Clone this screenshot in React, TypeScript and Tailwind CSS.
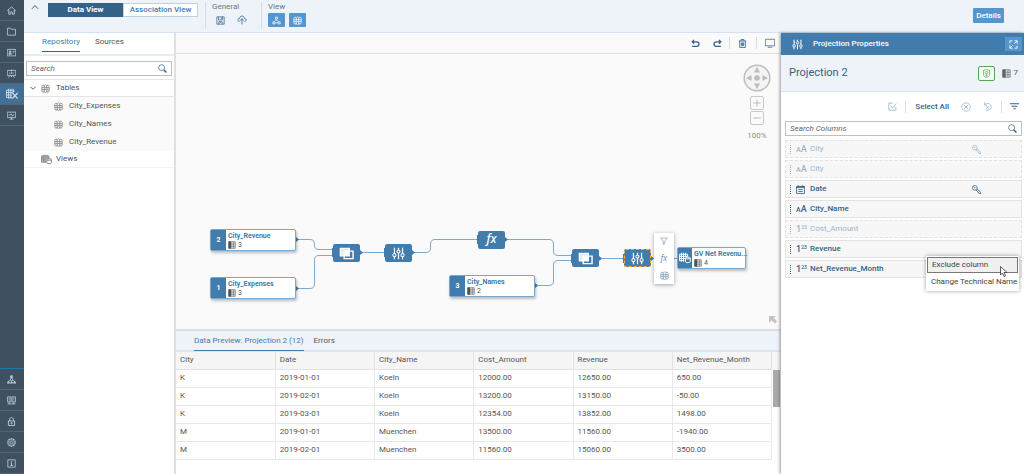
import { ReactNode, useState } from "react";

const FONT = "font-['Roboto','Noto_Sans',sans-serif]";

function Icon({ size = 12, className = "", children }: { size?: number; className?: string; children: ReactNode }) {
  return (
    <svg
      width={size}
      height={size}
      viewBox="0 0 16 16"
      fill="none"
      stroke="currentColor"
      strokeWidth={1.3}
      className={`shrink-0 ${className}`}
      aria-hidden="true"
    >
      {children}
    </svg>
  );
}

const paths = {
  home: <path d="M0.500 8.500L8 1.500l7.500 7M3 7v7.500h3.500v-4h3v4H13V7" strokeWidth="1.600" />,
  folder: <path d="M1 2h5l1.500 2H15v10.500H1z" strokeWidth="1.500" />,
  card: (
    <>
      <path d="M0.500 2.500h15v11.500H.500zM10 6h3.500M10 8.500h2" strokeWidth="1.500" />
      <circle cx="5.500" cy="6.500" r="1.500" fill="currentColor" />
      <path d="M3 11c0-3 5-3 5 0z" fill="currentColor" />
    </>
  ),
  board: <path d="M0.500 2.500h15v9H.500zM8 .500v2M5 11.500l-2 4M11 11.500l2 4M5 9V6M8 9V4.500M11 9V6M8 11.500v3" strokeWidth="1.500" />,
  modeler: (
    <>
      <path d="M.500 3h10v2.500M.500 3v9.500h7M.500 6.200h9M.500 9.400h7M3.500 1v13.500M6.500 1v13.500M9.500 1v5" />
      <path d="M8.500 6.500l7 7.500M15.500 6.500l-7 7.500" strokeWidth="1.800" />
    </>
  ),
  monitor: <path d="M.500 2h15v9.500H.500zM4.500 14.500h7M8 11.500v3M3 7h3l1.500-2 2 4L11 7h2" strokeWidth="1.500" />,
  people: (
    <>
      <circle cx="8" cy="3" r="2" fill="currentColor" />
      <path d="M6 10V6h4v4zM6 9l-4 3M10 9l4 3" />
      <path d="M0.500 14.500l2-4 2 4zM11.500 14.500l2-4 2 4zM6 14.500l2-3 2 3z" fill="currentColor" />
    </>
  ),
  servers: <path d="M1 1.500h6v9H1zM9 1.500h6v9H9zM3 4h2.500M3 7h2.500M11 4h2M11 7h2M4 10.500v4M12 10.500v4M1 14h14" strokeWidth="1.500" />,
  lock: (
    <>
      <path d="M2.500 7h11v8h-11zM4.500 7V4.500c0-4.500 7-4.500 7 0V7" strokeWidth="1.700" />
      <circle cx="8" cy="11" r="1.200" fill="currentColor" />
    </>
  ),
  gear: (
    <>
      <circle cx="8" cy="8" r="6.600" strokeWidth="1.900" strokeDasharray="3.200 .900" />
      <circle cx="8" cy="8" r="5" strokeWidth="1" />
      <circle cx="8" cy="8" r="2.200" strokeWidth="1.500" />
    </>
  ),
  info: (
    <>
      <path d="M1.500 1.500h13v13h-13z" strokeWidth="1.500" />
      <path d="M6.500 7H8v4.500M6 11.500h4M7.300 4.500h1.500" strokeWidth="1.800" />
    </>
  ),
  save: <path d="M1.500 1.500h13v13h-13zM4.500 1.500V7h7V1.500M5 14.500V10h6v4.500M7.500 12.500v-2M9.500 2.500v3" />,
  deploy: <path d="M4 10.500c-4-.5-3-5 0-5 .5-5 7.500-5 8 0 3 0 4 4.500 0 5M8 15V6M5 9l3-3 3 3" />,
  hierarchy: (
    <>
      <path d="M6.200 2h3.600v3.600H6.200zM1.500 10.500h3.800v3.500H1.500zM10.700 10.500h3.800v3.500h-3.800z" />
      <path d="M8 6v2.500M3.500 10.500L6 7.500M12.500 10.500L10 7.500M6 12h4" />
    </>
  ),
  table: (
    <path d="M1.500 4v9M5.700 3v12M10.300 3v12M14.500 4v9M1.500 3.500l2-2 2.200 2 2.300-2 2.300 2 2.200-2 2 2M1.500 6.500h13M1.500 10h13M1.500 13l2 1.500 2.200-1 2.300 1.500 2.300-1.500 2.200 1 2-1.500" />
  ),
  views: (
    <>
      <path d="M.500 3h11v3M.500 3v8.500H7M.500 5.800h11M.500 8.600H8M3.200 1v12M6 1v12M8.800 1v5" />
      <path d="M8.500 8c0-1.500 6.500-1.500 6.500 0v5c0 1.500-6.500 1.500-6.500 0zM8.500 8c0 1.500 6.500 1.500 6.500 0" />
    </>
  ),
  columns: (
    <>
      <path d="M1.500 1.500h13v13h-13zM10.500 1.500v13M6 5.800h8.500M6 10.200h8.500" />
      <path d="M1.500 1.500H6v13H1.500z" fill="currentColor" />
    </>
  ),
  search: (
    <>
      <circle cx="6.500" cy="6.500" r="5.300" />
      <path d="M10.500 10.500l4.500 4.500" strokeWidth="2.600" />
    </>
  ),
  undo: <path d="M5.500 1.500L2 5 5.500 8.500M2 5h8c5.500 0 5.500 8 0 8H2" strokeWidth="2.200" />,
  redo: <path d="M10.500 1.500L14 5l-3.500 3.500M14 5H6c-5.500 0-5.500 8 0 8h8" strokeWidth="2.200" />,
  trash: <path d="M1.500 3.500h13M5.500 3.500V1h5v2.500M3 3.500V15h10V3.500M6 6v6.500M8 6v6.500M10 6v6.500" strokeWidth="1.500" />,
  screen: <path d="M.500 2h15v10.500H.500zM4.500 14.800h7" strokeWidth="1.200" />,
  sliders: (
    <>
      <path d="M3 1v7M3 12v3M8 1v2.500M8 7.500V15M13 1v7M13 12v3" strokeWidth="1.500" />
      <circle cx="3" cy="10" r="1.900" />
      <circle cx="8" cy="5.500" r="1.900" />
      <circle cx="13" cy="10" r="1.900" />
    </>
  ),
  expand: <path d="M9.500 1.500h5v5M14.500 1.500L9.500 6.500M6.500 14.500h-5v-5M1.500 14.500l5-5M1.500 6V1.500H6M14.500 10v4.500H10" strokeWidth="1.600" />,
  shield: (
    <>
      <path d="M2.500 2.500L8 1l5.500 1.500v7C13.500 13 10 14 8 15c-2-1-5.500-2-5.500-5.500z" />
      <circle cx="8" cy="6.500" r="2.200" />
      <path d="M8 9v3M6 11l2 1.500 2-1.500" />
    </>
  ),
  check: <path d="M9 2H1.500v12.500H14V8.500M5 6.500l3.500 4.500L14.500 2.500" strokeWidth="1.500" />,
  cancel: (
    <>
      <circle cx="8" cy="8" r="6.700" />
      <path d="M5 5l6 6M11 5l-6 6" strokeWidth="1.600" />
    </>
  ),
  restore: <path d="M2.500 1v4.500H7M3 5C6 1 14 2 14.500 8.500c0 4.500-4 7-9.500 6M5.500 7l5 5M10.500 7l-5 5" strokeWidth="1.500" />,
  filterLines: <path d="M0 3h16M3 7.500h10M6 12h4" strokeWidth="1.900" />,
  funnel: <path d="M1.500 2h13L9.500 8v5.500L6.500 15V8z" />,
  calendar: (
    <>
      <path d="M1 2.500h14v12.500H1zM4 8h8M4 11.500h8" strokeWidth="1.500" />
      <path d="M1 3.800h14" strokeWidth="2.600" />
      <path d="M4 0v3M12 0v3" />
    </>
  ),
  key: (
    <>
      <circle cx="5" cy="5" r="4.200" />
      <circle cx="4.500" cy="4.500" r=".700" />
      <path d="M8.500 6.500l7 6.500-.5 2.500-2.500-.5-.5-1.500-1.500-.5-.5-1.500L6.500 8.800" strokeWidth="1.500" />
    </>
  ),
  join: (
    <>
      <path d="M5.500 5.500h9.500v8H5.500z" strokeWidth="1.500" />
      <path d="M1.500 2.500h9.500v8H1.500z" fill="#fff" fillOpacity=".85" strokeWidth="1.500" />
      <path d="M6 6h4.500v4H6z" fill="#fff" stroke="none" />
    </>
  ),
  chevronUp: <path d="M2 11.500L8 5l6 6.500" strokeWidth="2" />,
  chevronDown: <path d="M1 4.500l7 7 7-7" strokeWidth="2.500" />,
};

type IconName = keyof typeof paths;

const topNav: { label: string; icon: IconName }[] = [
  { label: "Home", icon: "home" },
  { label: "Files", icon: "folder" },
  { label: "Spaces", icon: "card" },
  { label: "Stories", icon: "board" },
  { label: "Data Builder", icon: "modeler" },
  { label: "Monitor", icon: "monitor" },
];

const bottomNav: { label: string; icon: IconName }[] = [
  { label: "Connections", icon: "people" },
  { label: "Systems", icon: "servers" },
  { label: "Security", icon: "lock" },
  { label: "Settings", icon: "gear" },
  { label: "About", icon: "info" },
];

const tables = ["City_Expenses", "City_Names", "City_Revenue"];

const headers = ["City", "Date", "City_Name", "Cost_Amount", "Revenue", "Net_Revenue_Month"];
const rows = [
  ["K", "2019-01-01", "Koeln", "12000.00", "12650.00", "650.00"],
  ["K", "2019-02-01", "Koeln", "13200.00", "13150.00", "-50.00"],
  ["K", "2019-03-01", "Koeln", "12354.00", "13852.00", "1498.00"],
  ["M", "2019-01-01", "Muenchen", "13500.00", "11560.00", "-1940.00"],
  ["M", "2019-02-01", "Muenchen", "11560.00", "15060.00", "3500.00"],
];

const columns = [
  { name: "City", type: "text", key: true, excluded: true },
  { name: "City", type: "text", excluded: true },
  { name: "Date", type: "date", key: true },
  { name: "City_Name", type: "text" },
  { name: "Cost_Amount", type: "number", excluded: true },
  { name: "Revenue", type: "number" },
  { name: "Net_Revenue_Month", type: "number", menu: true },
];

function NavButton({ label, icon, active }: { label: string; icon: IconName; active?: boolean }) {
  return (
    <li>
      <button
        aria-label={label}
        className={`flex h-[21px] w-full items-center justify-center border-b border-[#52667a] pr-px ${
          active ? "bg-[#427095] text-[#c5dcf0]" : "text-[#b3cbe0]"
        }`}
      >
        <Icon size={active ? 12 : 9}>{paths[icon]}</Icon>
      </button>
    </li>
  );
}

function Sidebar() {
  return (
    <nav className="flex w-6 shrink-0 flex-col justify-between bg-[#3f5161]">
      <ul>
        {topNav.map((item) => (
          <NavButton key={item.label} {...item} active={item.icon === "modeler"} />
        ))}
      </ul>
      <ul className="border-t border-[#1f76ab]">
        {bottomNav.map((item) => (
          <NavButton key={item.label} {...item} />
        ))}
      </ul>
    </nav>
  );
}

function TopBar() {
  const [view, setView] = useState("Data View");
  return (
    <header className="flex h-[33px] shrink-0 items-start border-b border-[#d3e3f3] bg-[#eef3f9] text-[#346187]">
      <button aria-label="Collapse toolbar" className="ml-[7px] mt-[3px] flex w-2 justify-center">
        <Icon size={8}>{paths.chevronUp}</Icon>
      </button>
      <div className="ml-[9px] mt-[3px] flex h-[14px]">
        {["Data View", "Association View"].map((name) => (
          <button
            key={name}
            onClick={() => setView(name)}
            className={`w-[75px] border text-[8px] leading-[12px] ${
              view === name
                ? "border-[#346187] bg-[#346187] font-bold text-white"
                : "border-[#c3cfdb] bg-white font-medium text-[#427cac]"
            }`}
          >
            {name}
          </button>
        ))}
      </div>
      <div className="ml-[7px] mt-[2px] h-[27px] border-l border-[#d6dde4] pl-1.5">
        <div className="text-[8px] leading-[10px] text-[#6a7683]">General</div>
        <div className="mt-[3px] flex gap-3 pl-1">
          <button aria-label="Save"><Icon size={9}>{paths.save}</Icon></button>
          <button aria-label="Deploy"><Icon size={10}>{paths.deploy}</Icon></button>
        </div>
      </div>
      <div className="ml-[14px] mt-[2px] h-[27px] border-l border-[#d6dde4] pl-1.5">
        <div className="text-[8px] leading-[10px] text-[#6a7683]">View</div>
        <div className="mt-px flex gap-1 text-white">
          <button aria-label="Show diagram" className="flex h-[14px] w-[17px] items-center justify-center rounded-[1px] bg-[#5496cd]">
            <Icon size={9}>{paths.hierarchy}</Icon>
          </button>
          <button aria-label="Show table" className="flex h-[14px] w-[17px] items-center justify-center rounded-[1px] bg-[#5496cd]">
            <Icon size={9}>{paths.table}</Icon>
          </button>
        </div>
      </div>
      <button className="ml-auto mr-5 mt-2 h-[15px] w-[31px] rounded-[1px] bg-[#5496cd] text-[8px] font-medium text-white">
        Details
      </button>
    </header>
  );
}

function SearchBox({ id, label }: { id: string; label: string }) {
  return (
    <label htmlFor={id} className="flex h-[15px] items-center border border-[#bfbfbf] bg-white px-1 text-[#346187]">
      <input
        id={id}
        type="text"
        placeholder={label}
        className="h-[13px] min-w-0 flex-1 text-[8px] text-[#333] outline-none placeholder:italic placeholder:text-[#666]"
      />
      <Icon size={9}>{paths.search}</Icon>
    </label>
  );
}

function Repository() {
  return (
    <aside className="w-[152px] shrink-0 border-r-2 border-[#e0e0e0] bg-white text-[8px] text-[#555]">
      <div className="flex h-[23px] gap-[15px] border-b-2 border-[#e2edf7] px-[18px]">
        <button className="h-[19px] border-b border-[#346187] text-[#427cac]">Repository</button>
        <button className="h-[19px] border-b border-transparent">Sources</button>
      </div>
      <div className="px-[2px] pb-[3px] pt-[5px]">
        <SearchBox id="repo-search" label="Search" />
      </div>
      <ul className="border-t border-[#e5e5e5]">
        <li className="flex h-[17px] items-center border-b border-[#e5e5e5] pl-1.5">
          <button aria-label="Collapse Tables" className="text-[#346187]">
            <Icon size={6}>{paths.chevronDown}</Icon>
          </button>
          <Icon size={9} className="ml-[5px] text-[#777]">{paths.table}</Icon>
          <span className="ml-1.5">Tables</span>
        </li>
        {tables.map((name) => (
          <li key={name} className="flex h-[18px] items-center bg-[#fafafa] pl-[30px]">
            <Icon size={9} className="text-[#777]">{paths.table}</Icon>
            <span className="ml-1.5">{name}</span>
          </li>
        ))}
        <li className="flex h-[17px] items-center border-b border-[#f2f2f2] pl-[17px]">
          <Icon size={11} className="text-[#777]">{paths.views}</Icon>
          <span className="ml-1">Views</span>
        </li>
      </ul>
    </aside>
  );
}

function SourceNode({ num, name, count, className }: { num: number; name: string; count: number; className: string }) {
  return (
    <div className={`absolute flex h-[22px] w-[86px] rounded-[2px] border border-[#79a8cf] bg-white shadow-[1px_2px_3px_rgba(0,0,0,0.25)] ${className}`}>
      <div className="flex w-[15px] shrink-0 items-center justify-center bg-[#427cac] text-[7px] font-bold text-white">{num}</div>
      <NodeText name={name} count={count} />
    </div>
  );
}

function NodeText({ name, count }: { name: string; count: number }) {
  return (
    <div className="pl-[2px] pt-[1px]">
      <div className="whitespace-nowrap text-[7px] font-bold leading-[10px] text-[#427cac]">{name}</div>
      <div className="flex items-center gap-[2px] text-[7px] leading-[8px] text-[#555]">
        <Icon size={8}>{paths.columns}</Icon>
        {count}
      </div>
    </div>
  );
}

function StepNode({ className, children }: { className: string; children: ReactNode }) {
  return (
    <div className={`absolute flex h-[18px] w-[27px] items-center justify-center rounded-[2px] bg-[#427cac] text-white ${className}`}>
      {children}
    </div>
  );
}

function Fx({ className }: { className: string }) {
  return <span className={`font-['Noto_Sans',sans-serif] italic leading-none ${className}`}>fx</span>;
}

function Diagram() {
  return (
    <div className="relative min-h-[200px] flex-1 overflow-hidden bg-[#fafafa]">
      <svg width="600" height="275" className="absolute left-0 top-0" fill="none" stroke="#7eaad0" aria-hidden="true">
        <path d="M120 185.500H134Q138.500 185.500 138.500 190V191.500Q138.500 195.500 143 195.500H157" />
        <path d="M120 234.500H134Q138.500 234.500 138.500 230V205.500Q138.500 201.500 143 201.500H157" />
        <path d="M183 198.500H210" />
        <path d="M236 198.500H250Q254.500 198.500 254.500 194V190Q254.500 185.500 259 185.500H302" />
        <path d="M329 185.500H373Q377.500 185.500 377.500 190V197Q377.500 201.500 382 201.500H396" />
        <path d="M359 231.500H373Q377.500 231.500 377.500 227V211Q377.500 206.500 382 206.500H396" />
        <path d="M423 204.500H448M475 204.500H502" />
        <g fill="#427cac" stroke="none">
          <path d="M120 183l3 2.500-3 2.500zM120 232l3 2.500-3 2.500zM184 196l3 2.500-3 2.500zM236 196l3 2.500-3 2.500zM329 183l3 2.500-3 2.500zM359 229l3 2.500-3 2.500zM423 202l3 2.500-3 2.500zM475 202l3 2.500-3 2.500z" />
          <path d="M156 194h2v9h-2zM208 194h2v9h-2zM301 181h2v9h-2zM395 200h2v9h-2zM447 200h2v9h-2z" />
        </g>
      </svg>
      <SourceNode num={2} name="City_Revenue" count={3} className="left-[34px] top-[175px]" />
      <SourceNode num={1} name="City_Expenses" count={3} className="left-[34px] top-[223px]" />
      <SourceNode num={3} name="City_Names" count={2} className="left-[273px] top-[221px]" />
      <StepNode className="left-[157px] top-[190px]"><Icon size={15}>{paths.join}</Icon></StepNode>
      <StepNode className="left-[209px] top-[190px]"><Icon size={13}>{paths.sliders}</Icon></StepNode>
      <StepNode className="left-[302px] top-[177px]"><Fx className="pb-[2px] text-[12px] font-medium" /></StepNode>
      <StepNode className="left-[396px] top-[195px]"><Icon size={15}>{paths.join}</Icon></StepNode>
      <StepNode className="left-[448px] top-[195px] outline-1 -outline-offset-1 outline-dashed outline-[#ffb02e]">
        <Icon size={13}>{paths.sliders}</Icon>
      </StepNode>
      <div className="absolute left-[501px] top-[193px] flex h-[22px] w-[69px] rounded-[2px] border border-[#79a8cf] bg-white shadow-[1px_2px_3px_rgba(0,0,0,0.25)]">
        <div className="flex w-[14px] shrink-0 items-center justify-center bg-[#427cac] text-white">
          <Icon size={12}>{paths.views}</Icon>
        </div>
        <NodeText name="GV Net Revenu..." count={4} />
      </div>
      <div className="absolute left-[478px] top-[179px] flex h-[51px] w-[20px] flex-col items-center justify-around bg-white text-[#7696b2] shadow-[0_1px_4px_rgba(0,0,0,0.35)]">
        <button aria-label="Filter"><Icon size={8}>{paths.funnel}</Icon></button>
        <button aria-label="Calculated column" className="flex"><Fx className="text-[8px]" /></button>
        <button aria-label="Preview data"><Icon size={9}>{paths.table}</Icon></button>
      </div>
      <div className="absolute right-[10px] top-[10px] flex w-[28px] flex-col items-center text-[#bdbdbd]">
        <svg width="28" height="28" viewBox="0 0 28 28" fill="currentColor" role="img" aria-label="Pan">
          <circle cx="14" cy="14" r="12.800" fill="#f4f4f4" stroke="currentColor" strokeWidth="1.500" />
          <circle cx="14" cy="14" r="2.800" />
          <path d="M14 3l3 5.500h-6zM14 25l3-5.500h-6zM3 14l5.500-3v6zM25 14l-5.500-3v6z" />
        </svg>
        <button aria-label="Zoom in" className="mt-1 flex size-[14px] items-center justify-center rounded-[2px] border border-[#c8c8c8]">
          <Icon size={12}><path d="M8 3v10M3 8h10" /></Icon>
        </button>
        <button aria-label="Zoom out" className="mt-px flex size-[14px] items-center justify-center rounded-[2px] border border-[#c8c8c8]">
          <Icon size={12}><path d="M3 8h10" /></Icon>
        </button>
        <span className="mt-1.5 text-[8px] leading-[10px] text-[#8a8a8a]">100%</span>
      </div>
      <svg width="8" height="8" viewBox="0 0 8 8" className="absolute bottom-[5px] right-[4px]" fill="#c4c4c4" aria-hidden="true">
        <path d="M0 0h7L5 2l3 3.500L6 7.500 2.500 4.500 0 7z" />
      </svg>
    </div>
  );
}

function Preview() {
  return (
    <section className="h-[145px] shrink-0 border-t-2 border-[#dedede] bg-white text-[8px] text-[#555]">
      <div className="flex h-[21px] gap-[10px] border-b-2 border-[#d9e7f4] bg-[#eef3f9] px-[18px]">
        <button className="h-5 border-b border-[#427cac] text-[#427cac]">Data Preview: Projection 2 (12)</button>
        <button className="h-5 border-b border-transparent">Errors</button>
      </div>
      <div className="flex">
        <table className="flex-1 table-fixed border-collapse text-left">
          <thead>
            <tr className="h-[17px] bg-[#f5f5f5]">
              {headers.map((h) => (
                <th key={h} className="w-[99px] border-b border-r border-[#e3e3e3] py-0 pl-1 font-normal">{h}</th>
              ))}
            </tr>
          </thead>
          <tbody>
            {rows.map((row, i) => (
              <tr key={i} className="h-[18px]">
                {row.map((cell, j) => (
                  <td key={j} className="border-b border-r border-[#e8e8e8] py-0 pl-1">{cell}</td>
                ))}
              </tr>
            ))}
          </tbody>
        </table>
        <div className="w-[9px] border-t-[18px] border-[#f5f5f5] pl-px">
          <div className="h-[37px] w-[7px] bg-[#aaa]" />
        </div>
      </div>
    </section>
  );
}

function TypeIcon({ type }: { type: string }) {
  if (type === "date") return <Icon size={9}>{paths.calendar}</Icon>;
  if (type === "text")
    return (
      <span className="font-medium leading-none">
        <span className="text-[7px]">A</span>
        <span className="text-[9px]">A</span>
      </span>
    );
  return (
    <span className="flex items-start font-medium leading-none">
      <span className="text-[9px]">1</span>
      <span className="text-[5px]">23</span>
    </span>
  );
}

function ColumnMenu() {
  return (
    <div className="absolute -top-[5px] right-[2px] z-10 w-[93px] bg-white p-px text-[8px] text-[#444] shadow-[0_0_4px_rgba(0,0,0,0.4)]">
      <button className="flex h-4 w-full items-center border border-[#777] bg-[#f0f0f0] pl-1">Exclude column</button>
      <button className="flex h-[17px] w-full items-center whitespace-nowrap pl-1">Change Technical Name</button>
      <svg width="8" height="11" viewBox="0 0 8 11" className="absolute left-[74px] top-[10px]" fill="#fff" stroke="#333" strokeWidth=".800" aria-hidden="true">
        <path d="M.500.500v8.500l2-2 1.500 3.500 1.500-.700L4 6.500h3z" />
      </svg>
    </div>
  );
}

function Properties() {
  return (
    <aside className="relative z-10 w-[243px] shrink-0 bg-white text-[8px] text-[#346187] shadow-[-1px_0_3px_rgba(0,0,0,0.4)]">
      <div className="flex h-[22px] items-center bg-[#427cac] pl-[11px] pr-[2px] text-white">
        <Icon size={11}>{paths.sliders}</Icon>
        <h2 className="ml-2.5 font-medium">Projection Properties</h2>
        <button aria-label="Full screen" className="ml-auto flex h-[14px] w-[17px] items-center justify-center bg-[#5496cd]">
          <Icon size={9}>{paths.expand}</Icon>
        </button>
      </div>
      <div className="flex h-[37px] items-center border-b border-[#dde6ef] bg-[#eef3f9] pl-2 pr-1.5">
        <h1 className="text-[11px] leading-[14px]">Projection 2</h1>
        <button aria-label="Valid" className="ml-auto flex h-[15px] w-[17px] items-center justify-center rounded-[2px] border border-[#57a557] bg-[#f6fbf6] text-[#57a557]">
          <Icon size={9}>{paths.shield}</Icon>
        </button>
        <Icon size={9} className="ml-[7px] text-[#666]">{paths.columns}</Icon>
        <span className="ml-[3px] text-[#555]">7</span>
      </div>
      <div className="flex h-[29px] items-center justify-end pr-[5px]">
        <button aria-label="Apply" className="text-[#9bb5cb]"><Icon size={9}>{paths.check}</Icon></button>
        <span className="ml-2 h-3 border-l border-[#ddd]" />
        <button className="ml-[9px] font-medium">Select All</button>
        <button aria-label="Exclude" className="ml-3 text-[#9bb5cb]"><Icon size={10}>{paths.cancel}</Icon></button>
        <button aria-label="Restore" className="ml-3 text-[#9bb5cb]"><Icon size={9}>{paths.restore}</Icon></button>
        <span className="ml-[9px] h-3 border-l border-[#ddd]" />
        <button aria-label="Filter" className="ml-2"><Icon size={9}>{paths.filterLines}</Icon></button>
      </div>
      <div className="pl-1 pr-[2px]">
        <SearchBox id="column-search" label="Search Columns" />
        <ul className="mt-1 flex flex-col gap-[2px]">
          {columns.map((col, i) => (
            <li
              key={i}
              className={`relative flex h-[18px] items-center border bg-[#f7f7f7] pl-1 ${
                col.excluded ? "border-dashed border-[#e3e3e3] text-[#9bb5cb]" : "border-[#e3e3e3]"
              }`}
            >
              <span className="h-[9px] border-l border-dotted border-current" />
              <span className="ml-[5px] flex w-[14px] shrink-0"><TypeIcon type={col.type} /></span>
              <span className={col.excluded ? "font-normal" : "font-medium"}>{col.name}</span>
              {col.key && <Icon size={9} className="ml-auto mr-10">{paths.key}</Icon>}
              {col.menu && <ColumnMenu />}
            </li>
          ))}
        </ul>
      </div>
    </aside>
  );
}

export default function App() {
  return (
    <div className={`flex min-h-screen bg-white ${FONT}`}>
      <Sidebar />
      <div className="flex min-w-0 flex-1 flex-col">
        <TopBar />
        <div className="flex min-h-0 flex-1">
          <Repository />
          <main className="flex min-w-0 flex-1 flex-col">
            <div className="flex h-[21px] shrink-0 items-center justify-end border-b border-[#e3e3e3] bg-[#fafafa] pr-1.5 text-[#346187]">
              <button aria-label="Undo"><Icon size={9}>{paths.undo}</Icon></button>
              <button aria-label="Redo" className="ml-[13px]"><Icon size={9}>{paths.redo}</Icon></button>
              <span className="ml-[7px] h-3 border-l border-[#ddd]" />
              <button aria-label="Delete" className="ml-2"><Icon size={9}>{paths.trash}</Icon></button>
              <span className="ml-[9px] h-3 border-l border-[#ddd]" />
              <button aria-label="Fit to screen" className="ml-2"><Icon size={10}>{paths.screen}</Icon></button>
            </div>
            <Diagram />
            <Preview />
          </main>
          <Properties />
        </div>
      </div>
    </div>
  );
}
